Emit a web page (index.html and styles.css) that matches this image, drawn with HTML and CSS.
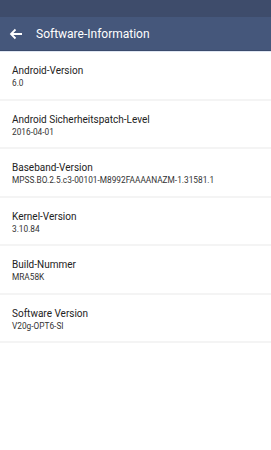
FILE: index.html
```html
<!DOCTYPE html>
<html lang="de">
<head>
    <meta charset="UTF-8">
    <meta name="viewport" content="width=device-width, initial-scale=1.0">
    <title>Software-Information</title>
    <link rel="stylesheet" href="styles.css">
</head>
<body>
    <div class="status-bar"></div>
    <header class="toolbar">
        <svg class="back-icon" width="14" height="12" viewBox="0 0 14 12">
            <path d="M13 6H2M6.5 1.5L2 6l4.5 4.5" fill="none" stroke="#ffffff" stroke-width="1.8"/>
        </svg>
        <h1 class="toolbar-title">Software-Information</h1>
    </header>

    <ul class="info-list">
        <li class="info-item">
            <div class="info-title">Android-Version</div>
            <div class="info-value">6.0</div>
        </li>
        <li class="info-item">
            <div class="info-title">Android Sicherheitspatch-Level</div>
            <div class="info-value">2016-04-01</div>
        </li>
        <li class="info-item">
            <div class="info-title">Baseband-Version</div>
            <div class="info-value">MPSS.BO.2.5.c3-00101-M8992FAAAANAZM-1.31581.1</div>
        </li>
        <li class="info-item">
            <div class="info-title">Kernel-Version</div>
            <div class="info-value">3.10.84</div>
        </li>
        <li class="info-item">
            <div class="info-title">Build-Nummer</div>
            <div class="info-value">MRA58K</div>
        </li>
        <li class="info-item">
            <div class="info-title">Software Version</div>
            <div class="info-value">V20g-OPT6-SI</div>
        </li>
    </ul>
</body>
</html>
```

FILE: styles.css
```css
* {
    margin: 0;
    padding: 0;
    box-sizing: border-box;
}

body {
    font-family: Roboto, "Liberation Sans", sans-serif;
    background-color: #ffffff;
    min-height: 100vh;
}

.status-bar {
    height: 17px;
    background-color: #3e4c6b;
}

.toolbar {
    height: 34px;
    display: flex;
    align-items: center;
    padding-left: 9px;
    background-color: #45577b;
    border-bottom: 1px solid #3a4a6c;
    box-shadow: 0 1px 0 #dfe6f2;
}

.back-icon {
    flex-shrink: 0;
}

.toolbar-title {
    margin-left: 13px;
    font-size: 12px;
    font-weight: normal;
    color: #ffffff;
}

.info-list {
    list-style: none;
    margin-top: 1px;
}

.info-item {
    height: 48.5px;
    padding: 12px 12px 0;
    border-bottom: 2px solid #f4f4f4;
}

.info-title {
    font-size: 10px;
    line-height: 13px;
    color: #222222;
}

.info-value {
    font-size: 8.3px;
    line-height: 11px;
    margin-top: 1px;
    color: #333333;
}
```
